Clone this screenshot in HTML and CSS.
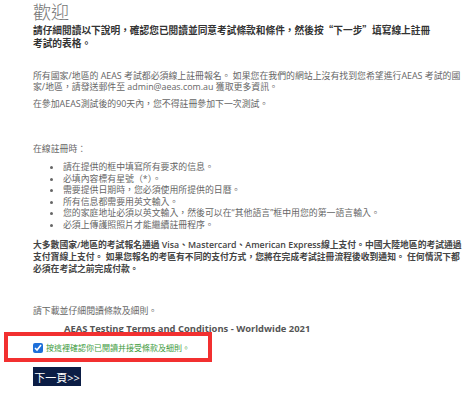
FILE: index.html
```html
<!DOCTYPE html>
<html>
<head>
    <meta charset="UTF-8">
    <title>歡迎</title>
    <link rel="stylesheet" href="styles.css">
</head>
<body>
<div id="wrap">
    <h1 class="title">歡迎</h1>
    <p class="intro">請仔細閱讀以下說明，確認您已閱讀並同意考試條款和條件，然後按“下一步”填寫線上註冊考試的表格。</p>
    <p class="txt t1">所有國家/地區的 AEAS 考試都必須線上註冊報名。 如果您在我們的網站上沒有找到您希望進行AEAS 考試的國家/地區，請發送郵件至 admin@aeas.com.au 獲取更多資訊。</p>
    <p class="txt t2">在參加AEAS測試後的90天內，您不得註冊參加下一次測試。</p>
    <p class="txt t3">在線註冊時：</p>
    <ul class="rules">
        <li>請在提供的框中填寫所有要求的信息。</li>
        <li>必填內容標有星號（*）。</li>
        <li>需要提供日期時，您必須使用所提供的日曆。</li>
        <li>所有信息都需要用英文輸入。</li>
        <li>您的家庭地址必須以英文輸入，然後可以在“其他語言”框中用您的第一語言輸入。</li>
        <li>必須上傳護照照片才能繼續註冊程序。</li>
    </ul>
    <p class="pay">大多數國家/地區的考試報名通過 Visa、Mastercard、American Express線上支付。中國大陸地區的考試通過支付寶線上支付。 如果您報名的考區有不同的支付方式，您將在完成考試註冊流程後收到通知。 任何情況下都必須在考試之前完成付款。</p>
    <p class="txt t4">請下載並仔細閱讀條款及細則。</p>
    <div class="terms"><a href="#">AEAS Testing Terms and Conditions - Worldwide 2021</a></div>
    <label class="agree"><input type="checkbox" checked>按這裡確認你已閱讀并接受條款及細則。</label>
    <button class="next">下一頁&gt;&gt;</button>
    <div class="mark"></div>
</div>
</body>
</html>
```

FILE: styles.css
```css
* {
    margin: 0;
    padding: 0;
}

ul, li {
    list-style: none;
}

body {
    background: #fff;
    font-family: "Open Sans", "Noto Sans CJK TC", sans-serif;
}

#wrap {
    position: relative;
    width: 430px;
    padding: 1px 0 0 33px;
}

#wrap .title {
    font-size: 18px;
    font-weight: 300;
    line-height: 22px;
    color: #777;
}

#wrap .intro {
    width: 402px;
    margin-top: 1px;
    font-family: "Noto Sans CJK TC", sans-serif;
    font-size: 9.7px;
    font-weight: bold;
    line-height: 13px;
    color: #333;
}

#wrap .txt {
    font-size: 8.9px;
    line-height: 11px;
    color: #666;
}

#wrap .t1 {
    margin-top: 20px;
}

#wrap .t2 {
    margin-top: 6px;
}

#wrap .t3 {
    margin-top: 34px;
}

#wrap .rules {
    margin-top: 7px;
    padding-left: 30px;
}

#wrap .rules li {
    list-style: disc;
    font-size: 8.9px;
    line-height: 11.5px;
    color: #666;
}

#wrap .pay {
    margin-top: 9px;
    font-size: 8.8px;
    font-weight: 600;
    line-height: 12px;
    color: #444;
}

#wrap .t4 {
    margin-top: 30px;
}

#wrap .terms {
    margin-top: 7px;
    padding-left: 31px;
    font-size: 9.4px;
    font-weight: bold;
    line-height: 12px;
}

#wrap .terms a {
    color: #555;
    text-decoration: none;
}

#wrap .agree {
    display: flex;
    align-items: center;
    gap: 3px;
    margin-top: 7px;
    font-size: 8px;
    line-height: 12px;
    color: #3c9a3c;
}

#wrap .agree input {
    width: 10px;
    height: 10px;
    margin: 0;
    accent-color: #1e6fd9;
}

#wrap .next {
    display: block;
    margin-top: 13px;
    width: 48px;
    height: 19px;
    border: 0;
    background-color: #0b1d45;
    color: #fff;
    font-family: "Open Sans", "Noto Sans CJK TC", sans-serif;
    font-size: 11px;
}

/* red annotation frame */
#wrap .mark {
    position: absolute;
    left: 4px;
    top: 332px;
    width: 200px;
    height: 22px;
    border: 4.5px solid #f23030;
}
```
